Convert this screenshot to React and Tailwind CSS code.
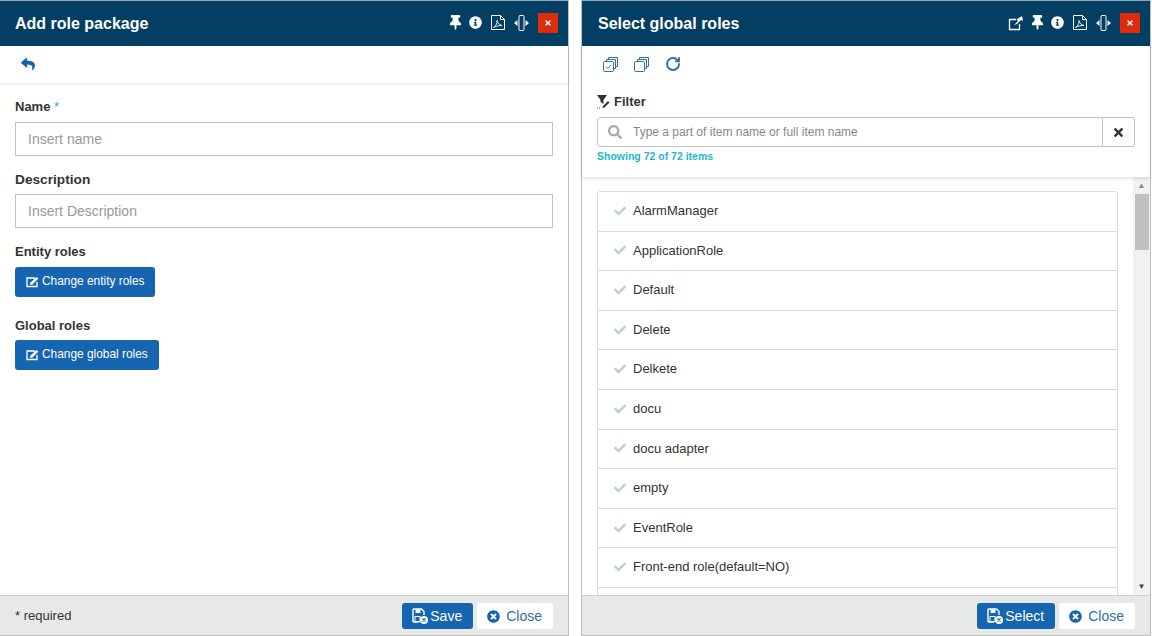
import { FaThumbtack, FaInfoCircle, FaTimes, FaReply, FaCheck, FaSearch, FaTimesCircle } from 'react-icons/fa';
import { RotateCw } from 'lucide-react';

// last row is only peeking out under the fold, no text visible
const roles = ['AlarmManager', 'ApplicationRole', 'Default', 'Delete', 'Delkete', 'docu', 'docu adapter', 'empty', 'EventRole', 'Front-end role(default=NO)', ''];

function ResizeIcon() {
  return (
    <svg width="15" height="16" viewBox="0 0 15 16" fill="none">
      <rect x="5" y="0.500" width="5" height="15" rx="1" stroke="white" />
      <path d="M3.500 5v6L0 8zM11.500 5v6L15 8z" fill="white" />
    </svg>
  );
}

function PdfIcon() {
  return (
    <svg width="14" height="15" viewBox="0 0 14 15" fill="none" stroke="white">
      <path d="M0.500 0.500h9l4 4v10h-13z" />
      <path d="M9.500 0.500v4h4" />
      <path d="M2.500 12.500C5 11 6.500 8 6 5.500 6.500 8 8.500 10 11 10.500 8 10.500 5 11 2.500 12.500z" strokeWidth="0.900" />
    </svg>
  );
}

function PopoutIcon() {
  return (
    <svg width="16" height="16" viewBox="0 0 16 16" fill="none" className="-mr-[5px]">
      <path d="M8 4.500H1.500v10h10V9" stroke="white" strokeWidth="1.300" />
      <path d="M6 10l4-4-1.500-1.500L14 1l1 5-2-1-4 4z" fill="white" />
    </svg>
  );
}

function StackIcon({ checked }) {
  return (
    <svg width="15" height="15" viewBox="0 0 15 15" fill="none" stroke="#2f6ea8" strokeWidth="1">
      <path d="M5.500 2.500v-2h9v9h-2" />
      <path d="M3.500 4.500v-2h9v9h-2" />
      <rect x="0.500" y="4.500" width="10" height="10" rx="1" fill="white" />
      {checked && <path d="M3 9.500l2 2 3-3.500" />}
    </svg>
  );
}

function FilterIcon() {
  return (
    <svg width="14" height="14" viewBox="0 0 14 14">
      <path d="M0 0h10L6.500 5v4L3.500 7V5z" fill="#333" />
      <path d="M6 11l5-5 1.500 1.500-5 5-2 .5z" fill="#333" />
      <path d="M0 13h4" stroke="#555" strokeDasharray="1 1" fill="none" />
    </svg>
  );
}

function EditIcon() {
  return (
    <svg width="13" height="12" viewBox="0 0 13 12" fill="none">
      <path d="M9 2H1v8.500h10V6" stroke="white" strokeWidth="1.300" />
      <path d="M4.500 6.500L10.500 1 12.500 2.500 6.500 8.500 4 9z" fill="white" />
    </svg>
  );
}

function SaveIcon() {
  return (
    <svg width="16" height="16" viewBox="0 0 16 16" fill="none">
      <path d="M1 1h8.500L12 3.500V7M7 14H1z M1 1v13" stroke="white" strokeWidth="1.400" />
      <rect x="3.500" y="1.500" width="5" height="3.500" fill="white" />
      <rect x="3" y="8.500" width="5" height="5" stroke="white" />
      <circle cx="12" cy="12" r="4" fill="white" />
      <path d="M10.500 10.500l3 3M13.500 10.500l-3 3" stroke="#1565b0" strokeWidth="1.300" />
    </svg>
  );
}

function Header({ title, popout }) {
  return (
    <div className="h-[46px] shrink-0 bg-[#033e63] border-t border-[#8fa9ba] flex items-center pl-[15px] pr-[10px]">
      <h2 className={`text-white text-[16px] font-bold flex-1 ${popout ? 'pl-px' : ''}`}>{title}</h2>
      <div className="flex items-center gap-[9px] text-white mr-[9px] mb-[2px]">
        {popout && <PopoutIcon />}
        <FaThumbtack size={15} className="ml-[2px] -mr-[3px]" />
        <FaInfoCircle size={13} />
        <PdfIcon />
        <ResizeIcon />
      </div>
      <div className="w-5 h-5 mb-[2px] bg-[#dc2c09] flex items-center justify-center text-white">
        <FaTimes size={8} />
      </div>
    </div>
  );
}

function Footer({ left, action }) {
  return (
    <div className="h-[40px] shrink-0 bg-[#e7e9e9] border-t border-[#cfcfcf] flex items-center px-[15px]">
      <span className="text-[13px] text-[#333] flex-1">{left}</span>
      <button className="h-[26px] pl-[10px] pr-[11px] pt-px bg-[#1565b0] rounded-[3px] text-white text-[14px] flex items-center gap-[2px] mr-[4px]">
        <SaveIcon />
        {action}
      </button>
      <button className="h-[26px] pl-[10px] pr-[11px] pt-px bg-white rounded-[3px] text-[#2f6ea8] text-[14px] flex items-center gap-[6px]">
        <FaTimesCircle size={13} className="text-[#1565b0]" />
        Close
      </button>
    </div>
  );
}

function ChangeButton({ children }) {
  return (
    <button className="h-[30px] px-[11px] bg-[#1565b0] rounded-[3px] text-white text-[11.900px] flex items-center gap-[3px]">
      <EditIcon />
      {children}
    </button>
  );
}

function LeftPanel() {
  return (
    <div className="w-[569px] h-[636px] flex flex-col border-r border-b border-[#bdbdbd]">
      <Header title="Add role package" />
      <div className="h-[37px] shrink-0 flex items-center pl-[21px] pb-[2px] shadow-[0_1px_3px_rgba(0,0,0,0.1)]">
        <FaReply size={14} className="text-[#1565b0]" />
      </div>
      <div className="flex-1 px-[15px] pt-[16px]">
        <label className="block text-[13px] font-bold text-[#333] leading-[16px]">
          Name <span className="text-[#2aa8c4] font-normal">*</span>
        </label>
        <input placeholder="Insert name" className="block w-full h-[34px] mt-[7px] px-3 border border-[#c4c4c4] text-[14px] placeholder:text-[#999] outline-none" />
        <label className="block mt-[16px] text-[13.700px] font-bold text-[#333] leading-[16px]">Description</label>
        <input placeholder="Insert Description" className="block w-full h-[34px] mt-[6px] px-3 border border-[#c4c4c4] text-[14px] placeholder:text-[#999] outline-none" />
        <label className="block mt-[16px] mb-[7px] text-[13px] font-bold text-[#333] leading-[16px]">Entity roles</label>
        <ChangeButton>Change entity roles</ChangeButton>
        <label className="block mt-[21px] mb-[6px] text-[13px] font-bold text-[#333] leading-[16px]">Global roles</label>
        <ChangeButton>Change global roles</ChangeButton>
      </div>
      <Footer left="* required" action="Save" />
    </div>
  );
}

function RightPanel() {
  return (
    <div className="w-[570px] h-[636px] flex flex-col border-l border-r border-b border-[#bdbdbd]">
      <Header title="Select global roles" popout />
      <div className="h-[131px] shrink-0 z-10 bg-white shadow-[0_1px_4px_rgba(0,0,0,0.15)] px-[15px]">
        <div className="h-[36px] flex items-center gap-[16px] pl-[6px]">
          <StackIcon checked />
          <StackIcon />
          <RotateCw size={16} strokeWidth={2.800} className="text-[#2f6ea8]" />
        </div>
        <div className="flex items-center gap-[3px] mt-[12px] h-4 text-[13px] font-bold text-[#333]">
          <FilterIcon />
          Filter
        </div>
        <div className="flex h-[30px] mt-[7px] border border-[#c4c4c4] rounded-[3px]">
          <div className="flex-1 flex items-center pl-[10px] gap-[11px] text-[12px] text-[#888]">
            <FaSearch size={14} className="text-[#aaa]" />
            Type a part of item name or full item name
          </div>
          <div className="w-[32px] border-l border-[#c4c4c4] flex items-center justify-center text-[#333]">
            <FaTimes size={13} />
          </div>
        </div>
        <p className="text-[10.500px] font-bold text-[#1fb6c9] mt-[2px] leading-[14px]">Showing 72 of 72 items</p>
      </div>
      <div className="flex-1 min-h-0 flex overflow-hidden">
        <div className="flex-1 px-[15px] pt-[14px] overflow-hidden">
          <ul className="border border-[#dcdcdc] rounded-[3px]">
            {roles.map(r => (
              <li key={r} className="h-[39.600px] pb-[1px] border-b border-[#dcdcdc] flex items-center pl-[16px] gap-[7px] text-[13px] text-[#333]">
                {r && <FaCheck size={12} className="text-[#bcd0cf]" />}
                {r}
              </li>
            ))}
          </ul>
        </div>
        <div className="w-[17px] bg-[#f1f1f1] flex flex-col items-center">
          <div className="h-[17px] flex items-center text-[#888] text-[8px]">▲</div>
          <div className="w-[14px] h-[56px] bg-[#c1c1c1]" />
          <div className="flex-1" />
          <div className="h-[17px] flex items-center text-[#444] text-[8px]">▼</div>
        </div>
      </div>
      <Footer action="Select" />
    </div>
  );
}

export default function App() {
  return (
    <div className="w-[1152px] h-[636px] flex gap-[12px] bg-white overflow-hidden font-['Liberation_Sans',Arial,sans-serif]">
      <LeftPanel />
      <RightPanel />
    </div>
  );
}
